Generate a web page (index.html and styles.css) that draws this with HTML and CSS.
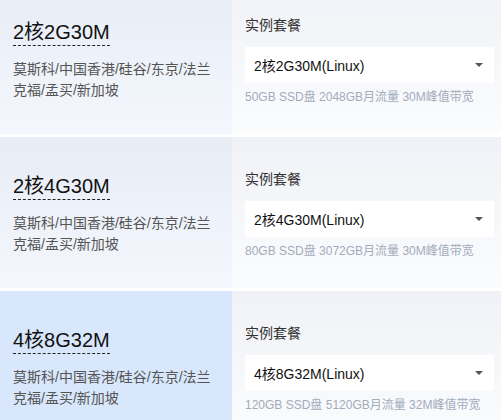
FILE: index.html
```html
<!DOCTYPE html>
<html lang="zh-CN">
<head>
  <meta charset="UTF-8" />
  <meta name="viewport" content="width=device-width, initial-scale=1.0"/>
  <title>云服务器套餐</title>
  <link rel="stylesheet" href="styles.css">
</head>
<body>

  <div class="plans">
    <!-- 2核2G -->
    <div class="plan">
      <div class="plan-info">
        <div class="plan-name">2核2G30M</div>
        <p class="plan-regions">莫斯科/中国香港/硅谷/东京/法兰克福/孟买/新加坡</p>
      </div>
      <div class="plan-config">
        <div class="config-label">实例套餐</div>
        <div class="select"><span>2核2G30M(Linux)</span><i class="caret"></i></div>
        <div class="config-spec">50GB SSD盘 2048GB月流量 30M峰值带宽</div>
      </div>
    </div>

    <!-- 2核4G -->
    <div class="plan">
      <div class="plan-info">
        <div class="plan-name">2核4G30M</div>
        <p class="plan-regions">莫斯科/中国香港/硅谷/东京/法兰克福/孟买/新加坡</p>
      </div>
      <div class="plan-config">
        <div class="config-label">实例套餐</div>
        <div class="select"><span>2核4G30M(Linux)</span><i class="caret"></i></div>
        <div class="config-spec">80GB SSD盘 3072GB月流量 30M峰值带宽</div>
      </div>
    </div>

    <!-- 4核8G (selected) -->
    <div class="plan active">
      <div class="plan-info">
        <div class="plan-name">4核8G32M</div>
        <p class="plan-regions">莫斯科/中国香港/硅谷/东京/法兰克福/孟买/新加坡</p>
      </div>
      <div class="plan-config">
        <div class="config-label">实例套餐</div>
        <div class="select"><span>4核8G32M(Linux)</span><i class="caret"></i></div>
        <div class="config-spec">120GB SSD盘 5120GB月流量 32M峰值带宽</div>
      </div>
    </div>
  </div>

</body>
</html>
```

FILE: styles.css
```css
* {
  box-sizing: border-box;
}

html, body {
  margin: 0;
  padding: 0;
  background: #fff;
  font-family: 'Liberation Sans', 'Noto Sans CJK SC', sans-serif;
  color: #333;
  overflow: hidden;
}

.plans {
  display: flex;
  flex-direction: column;
  gap: 3px;
  margin-top: -17px;
}

.plan {
  display: flex;
  height: 151px;
}

.plan-info {
  width: 232px;
  padding: 37px 20px 0 13px;
  display: flex;
  flex-direction: column;
  align-items: flex-start;
  background: linear-gradient(to bottom, #e7ecf5, #f4f7fd);
}

.plan.active .plan-info {
  background: #d8e7fb;
}

.plan-name {
  font-size: 20px;
  line-height: 24px;
  color: #111;
  padding-bottom: 1px;
  border-bottom: 1px dashed #222;
}

.plan-regions {
  margin: 13px 0 0;
  font-size: 14px;
  line-height: 21px;
  color: #555;
}

.plan-config {
  flex: 1;
  padding: 32px 7px 0 13px;
  display: flex;
  flex-direction: column;
  background: linear-gradient(to bottom, #f0f2f7, #fbfcfe);
}

.config-label {
  font-size: 14px;
  line-height: 20px;
  color: #333;
}

.select {
  margin-top: 12px;
  height: 36px;
  background: #fff;
  padding: 0 10px 0 9px;
  display: flex;
  align-items: center;
  justify-content: space-between;
  font-size: 14px;
  color: #111;
}

.caret {
  width: 0;
  height: 0;
  border-left: 4px solid transparent;
  border-right: 4px solid transparent;
  border-top: 4px solid #50555e;
  margin-right: 1px;
}

.config-spec {
  margin-top: 4px;
  font-size: 12px;
  line-height: 20px;
  color: #a3abbb;
}
```
